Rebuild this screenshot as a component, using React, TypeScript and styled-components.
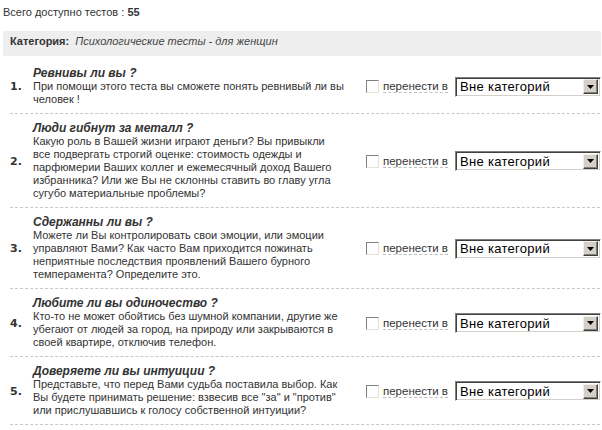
import React from "react";
import styled, { createGlobalStyle } from "styled-components";

const GlobalStyle = createGlobalStyle`
  body {
    margin: 0;
    background: #fff;
    font-family: "Liberation Sans", Arial, sans-serif;
    font-size: 11px;
    color: #333;
  }
`;

const Page = styled.div`
  padding: 6px 1px 0 3px;
`;

const Total = styled.div`
  line-height: 13px;
  b {
    font-weight: bold;
  }
`;

const CategoryBar = styled.div`
  margin-top: 12px;
  background: #eeeeee;
  padding: 4px 7px 8px;
  line-height: 13px;
`;

const CategoryLabel = styled.b`
  font-weight: bold;
  margin-right: 6px;
`;

const CategoryName = styled.i`
  color: #444;
`;

const List = styled.div`
  margin-top: 3px;
  padding-left: 7px;
`;

const Row = styled.div`
  display: grid;
  grid-template-columns: 23px 327px 19px 76px auto;
  align-items: center;
  padding: 8px 0 7px;
  margin-right: 1px;
  border-bottom: 1px dashed #c8c8c8;
`;

const Num = styled.div`
  font-family: "DejaVu Sans", Verdana, sans-serif;
  font-weight: bold;
  font-size: 11px;
  color: #333;
`;

const Text = styled.div`
  line-height: 13px;
`;

const Title = styled.div`
  font-weight: bold;
  font-style: italic;
  font-size: 12px;
  color: #333;
`;

const Line = styled.div`
  white-space: nowrap;
`;

const Check = styled.span`
  display: block;
  width: 11px;
  height: 11px;
  margin-left: 6px;
  background: #fff;
  border: 1px solid;
  border-color: #808080 #e4e2dc #e4e2dc #808080;
`;

const MoveLabel = styled.span`
  justify-self: start;
  margin-left: 4px;
  white-space: nowrap;
  border-bottom: 1px dashed #c0c0c0;
  line-height: 12px;
  font-size: 11.5px;
`;

const Select = styled.div`
  width: 139px;
  height: 18px;
  display: flex;
  align-items: center;
  border: 1px solid;
  border-color: #808080 #ffffff #ffffff #808080;
  box-shadow: inset 1px 1px 0 #404040, inset -1px -1px 0 #d4d0c8;
  background: #fff;
  font-size: 13px;
  color: #000;
  padding: 0 1px 0 4px;
  box-sizing: content-box;
`;

const SelectValue = styled.span`
  flex: 1;
  letter-spacing: 0.3px;
`;

const DropButton = styled.span`
  width: 15px;
  height: 15px;
  display: flex;
  align-items: center;
  justify-content: center;
  background: #d4d0c8;
  border: 1px solid;
  border-color: #f0efea #404040 #404040 #f0efea;
  box-shadow: inset -1px -1px 0 #808080;
  box-sizing: border-box;
  margin-right: 1px;
`;

type Test = { title: string; lines: string[] };

const tests: Test[] = [
  {
    title: "Ревнивы ли вы ?",
    lines: ["При помощи этого теста вы сможете понять ревнивый ли вы", "человек !"],
  },
  {
    title: "Люди гибнут за металл ?",
    lines: [
      "Какую роль в Вашей жизни играют деньги? Вы привыкли",
      "все подвергать строгий оценке: стоимость одежды и",
      "парфюмерии Ваших коллег и ежемесячный доход Вашего",
      "избранника? Или же Вы не склонны ставить во главу угла",
      "сугубо материальные проблемы?",
    ],
  },
  {
    title: "Сдержанны ли вы ?",
    lines: [
      "Можете ли Вы контролировать свои эмоции, или эмоции",
      "управляют Вами? Как часто Вам приходится пожинать",
      "неприятные последствия проявлений Вашего бурного",
      "темперамента? Определите это.",
    ],
  },
  {
    title: "Любите ли вы одиночество ?",
    lines: [
      "Кто-то не может обойтись без шумной компании, другие же",
      "убегают от людей за город, на природу или закрываются в",
      "своей квартире, отключив телефон.",
    ],
  },
  {
    title: "Доверяете ли вы интуиции ?",
    lines: [
      "Представьте, что перед Вами судьба поставила выбор. Как",
      "Вы будете принимать решение: взвесив все \"за\" и \"против\"",
      "или прислушавшись к голосу собственной интуиции?",
    ],
  },
];

const App = () => (
  <>
    <GlobalStyle />
    <Page>
      <Total>
        Всего доступно тестов : <b>55</b>
      </Total>
      <CategoryBar>
        <CategoryLabel>Категория:</CategoryLabel>
        <CategoryName>Психологические тесты - для женщин</CategoryName>
      </CategoryBar>
      <List>
        {tests.map((t, i) => (
          <Row key={i}>
            <Num>{i + 1}.</Num>
            <Text>
              <Title>{t.title}</Title>
              {t.lines.map((l, j) => (
                <Line key={j}>{l}</Line>
              ))}
            </Text>
            <Check />
            <MoveLabel>перенести в</MoveLabel>
            <Select>
              <SelectValue>Вне категорий</SelectValue>
              <DropButton>
                <svg width="7" height="4" viewBox="0 0 7 4">
                  <path d="M0 0h7L3.5 4z" fill="#000" />
                </svg>
              </DropButton>
            </Select>
          </Row>
        ))}
      </List>
    </Page>
  </>
);

export default App;
